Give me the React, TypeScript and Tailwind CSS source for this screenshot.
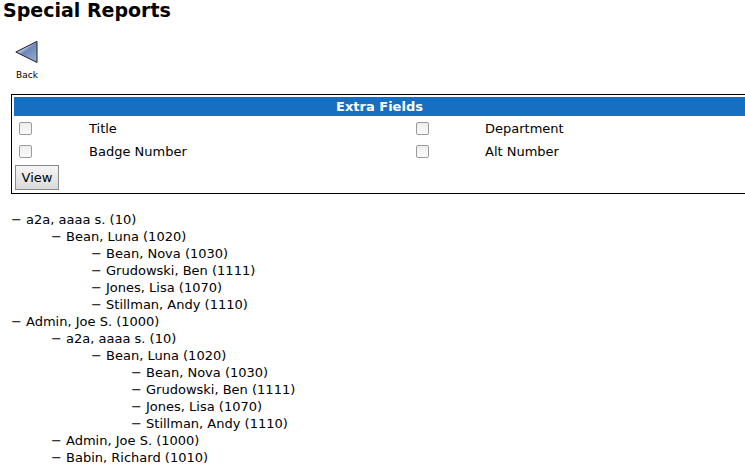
interface Person {
  name: string
  badge: number
  reports?: Person[]
}

const LUNA: Person = {
  name: 'Bean, Luna',
  badge: 1020,
  reports: [
    { name: 'Bean, Nova', badge: 1030 },
    { name: 'Grudowski, Ben', badge: 1111 },
    { name: 'Jones, Lisa', badge: 1070 },
    { name: 'Stillman, Andy', badge: 1110 },
  ],
}

const PEOPLE: Person[] = [
  { name: 'a2a, aaaa s.', badge: 10, reports: [LUNA] },
  {
    name: 'Admin, Joe S.',
    badge: 1000,
    reports: [
      { name: 'a2a, aaaa s.', badge: 10, reports: [LUNA] },
      { name: 'Admin, Joe S.', badge: 1000 },
      { name: 'Babin, Richard', badge: 1010 },
    ],
  },
]

// two fields per table row
const FIELD_ROWS = [
  [
    { id: 'title', label: 'Title' },
    { id: 'department', label: 'Department' },
  ],
  [
    { id: 'badge', label: 'Badge Number' },
    { id: 'alt', label: 'Alt Number' },
  ],
]

export default function App() {
  return (
    <main className="overflow-hidden bg-white font-['DejaVu_Sans',sans-serif] text-[13px] leading-[17px] text-black">
      <h1 className="pl-[3px] text-[19px] leading-5 font-bold">Special Reports</h1>

      <a href="#" className="mt-5 ml-3 flex w-[30px] flex-col items-center text-[9px] leading-3">
        <BackIcon />
        <span className="mt-[5px]">Back</span>
      </a>

      <form className="mt-[13px] -mr-[3px] ml-[11px]" onSubmit={(e) => e.preventDefault()}>
        <ExtraFields />
      </form>

      <div className="mt-[17px] ml-[11px]">
        <Tree people={PEOPLE} />
      </div>
    </main>
  )
}

function BackIcon() {
  return (
    <svg width="24" height="24" viewBox="0 0 24 24" aria-hidden="true">
      <defs>
        <linearGradient id="back-fill" x1="0.2" y1="0.1" x2="0.8" y2="0.9">
          <stop offset="0" stopColor="#b4c4e2" />
          <stop offset="0.34" stopColor="#a3b4d6" />
          <stop offset="0.46" stopColor="#6f88b8" />
          <stop offset="1" stopColor="#90a4cd" />
        </linearGradient>
      </defs>
      <path d="M0.8 12 L22 1.3 V22.5 Z" fill="url(#back-fill)" stroke="#20222b" strokeLinejoin="round" />
    </svg>
  )
}

function ExtraFields() {
  return (
    <table className="w-full table-fixed border-separate border-spacing-[2px] border border-black">
      <colgroup>
        <col className="w-[72px]" />
        <col />
        <col className="w-[71px]" />
        <col className="w-[36%]" />
      </colgroup>
      <thead>
        <tr>
          <th colSpan={4} className="bg-[#176fc1] p-px text-center font-bold text-white">
            Extra Fields
          </th>
        </tr>
      </thead>
      <tbody>
        {FIELD_ROWS.map((row) => (
          <tr key={row[0].id}>
            {row.map((f) => (
              <FieldCells key={f.id} id={f.id} label={f.label} />
            ))}
          </tr>
        ))}
        <tr>
          <td colSpan={4} className="p-px">
            <button
              type="submit"
              className="block h-[25px] w-11 border border-[#8a8a8a] bg-linear-to-b from-[#f6f6f6] to-[#dadada]"
            >
              View
            </button>
          </td>
        </tr>
      </tbody>
    </table>
  )
}

function FieldCells({ id, label }: { id: string; label: string }) {
  return (
    <>
      <td className="h-[21px] py-px pl-[5px]">
        <input
          type="checkbox"
          id={id}
          className="block size-[13px] appearance-none rounded-[2px] border border-[#9a9a9a] bg-linear-to-b from-[#ececec] to-[#fcfcfc] checked:from-[#176fc1] checked:to-[#176fc1]"
        />
      </td>
      <td className="p-px">
        <label htmlFor={id}>{label}</label>
      </td>
    </>
  )
}

function Tree({ people }: { people: Person[] }) {
  return (
    <ul>
      {people.map((p) => (
        <li key={p.name}>
          − {p.name} ({p.badge})
          {p.reports && (
            <div className="pl-10">
              <Tree people={p.reports} />
            </div>
          )}
        </li>
      ))}
    </ul>
  )
}
